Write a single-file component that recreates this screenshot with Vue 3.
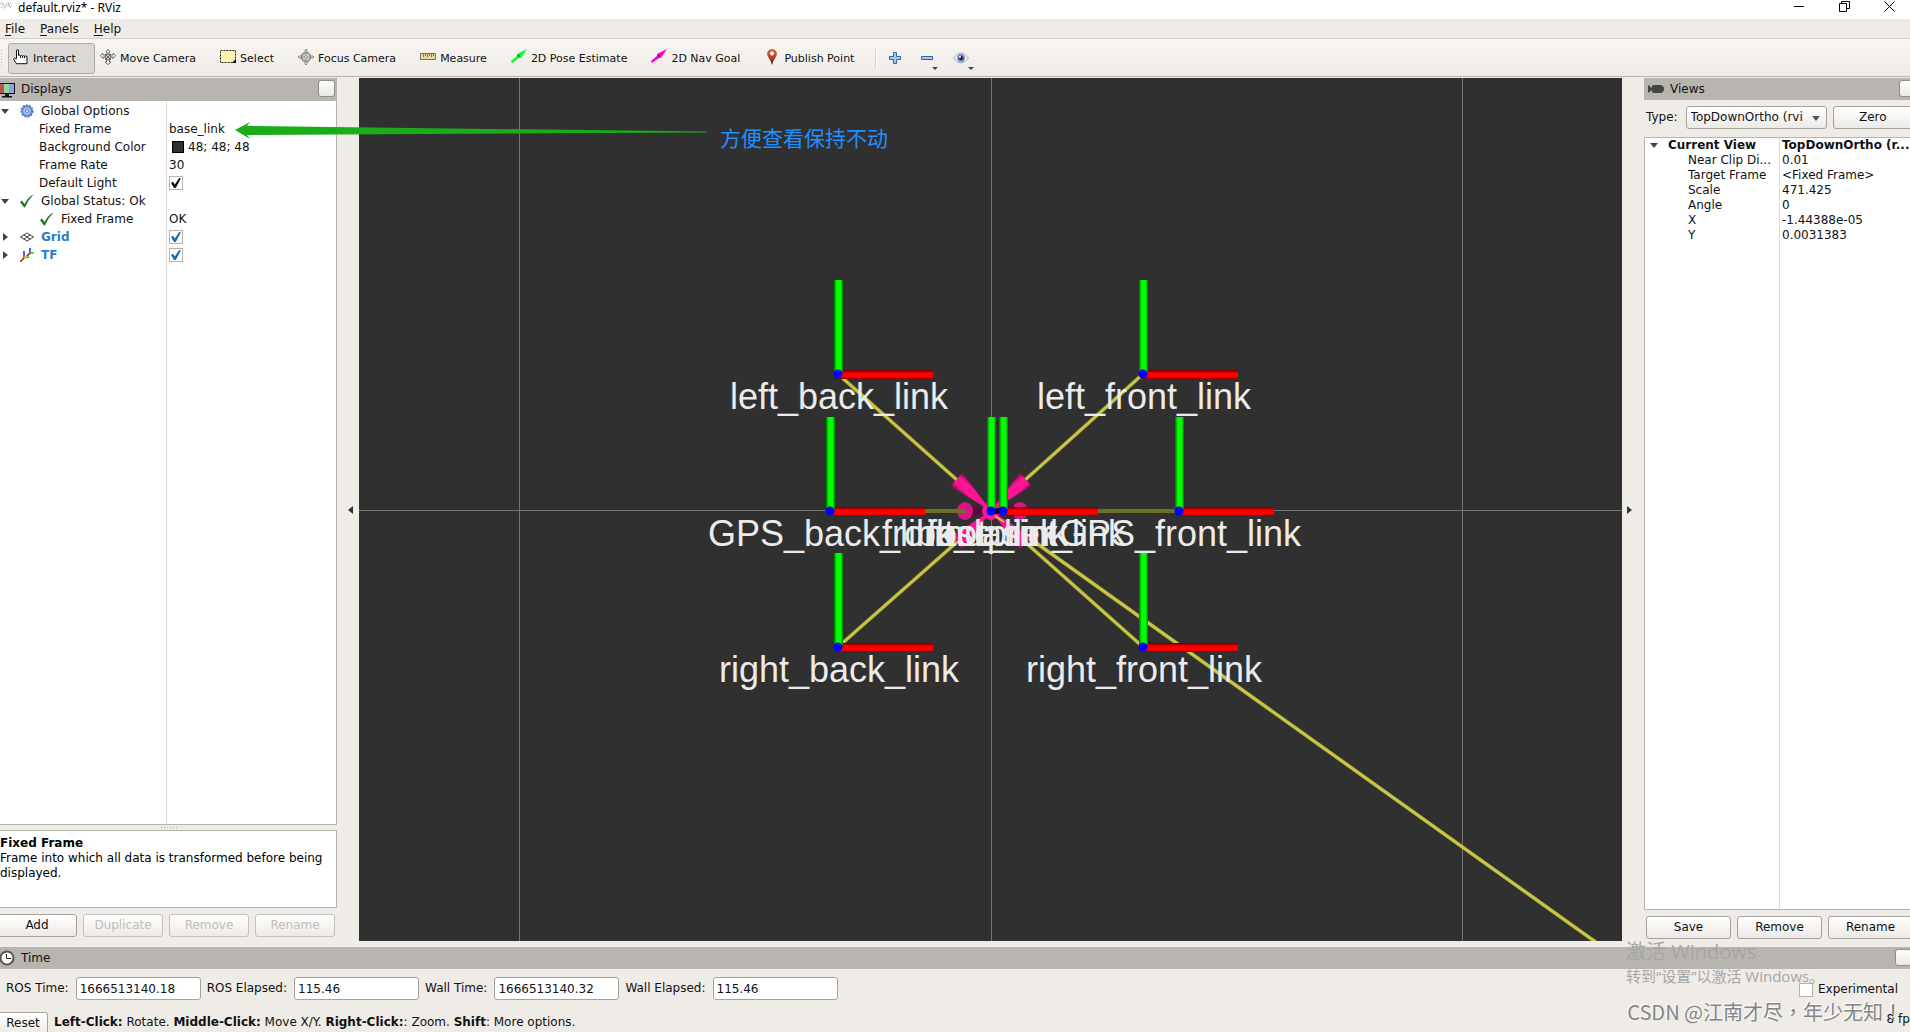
<script setup>
import { ref } from 'vue'

const tools = [
  { id: 'interact', label: 'Interact', active: true },
  { id: 'move', label: 'Move Camera' },
  { id: 'select', label: 'Select' },
  { id: 'focus', label: 'Focus Camera' },
  { id: 'measure', label: 'Measure' },
  { id: 'pose', label: '2D Pose Estimate' },
  { id: 'nav', label: '2D Nav Goal' },
  { id: 'publish', label: 'Publish Point' },
]

const displays = [
  { name: 'Global Options', level: 0, icon: 'gear', arrow: 'open' },
  { name: 'Fixed Frame', level: 1, value: 'base_link' },
  { name: 'Background Color', level: 1, value: '48; 48; 48', swatch: true },
  { name: 'Frame Rate', level: 1, value: '30' },
  { name: 'Default Light', level: 1, check: true },
  { name: 'Global Status: Ok', level: 0, icon: 'ok', arrow: 'open' },
  { name: 'Fixed Frame', level: 2, icon: 'ok', value: 'OK' },
  { name: 'Grid', level: 0, icon: 'grid', arrow: 'closed', check: true, display: true },
  { name: 'TF', level: 0, icon: 'tf', arrow: 'closed', check: true, display: true },
]

const view = [
  { name: 'Near Clip Di...', value: '0.01' },
  { name: 'Target Frame', value: '<Fixed Frame>' },
  { name: 'Scale', value: '471.425' },
  { name: 'Angle', value: '0' },
  { name: 'X', value: '-1.44388e-05' },
  { name: 'Y', value: '0.0031383' },
]

const times = ref([
  { id: 'ros-time', label: 'ROS Time:', value: '1666513140.18' },
  { id: 'ros-elapsed', label: 'ROS Elapsed:', value: '115.46' },
  { id: 'wall-time', label: 'Wall Time:', value: '1666513140.32' },
  { id: 'wall-elapsed', label: 'Wall Elapsed:', value: '115.46' },
])

const frames = [
  { x: 838, y: 374, labels: ['left_back_link'] },
  { x: 1143, y: 374, labels: ['left_front_link'] },
  { x: 830, y: 511, labels: ['GPS_back_link'] },
  { x: 1179, y: 511, labels: ['GPS_front_link'] },
  { x: 991, y: 511, labels: ['base_link', 'imu_link', 'footprint'] },
  { x: 1003, y: 511, labels: ['front_laser_link'] },
  { x: 838, y: 647, labels: ['right_back_link'] },
  { x: 1143, y: 647, labels: ['right_front_link'] },
]
</script>

<template>
  <div class="window">
    <header class="titlebar">
      <svg class="app-icon" width="13" height="12" viewBox="0 0 13 12" fill="none" stroke="#a9a9a9">
        <path d="M0 3l3 2-2 3M2 2l3 4-2 4M6 3l2 3 3-3M8 2l2 6 2-3M5 7l4-2" stroke-dasharray="2 1" />
      </svg>
      <span class="title">default.rviz* - RViz</span>
      <div class="win-buttons">
        <button aria-label="Minimize"><svg width="11" height="11"><path d="M0 5.500h10" stroke="#000" /></svg></button>
        <button aria-label="Restore"><svg width="11" height="11" fill="none" stroke="#000"><path d="M.5 2.500h7v8h-7zM2.500 2.500v-2h8v7h-3" /></svg></button>
        <button aria-label="Close"><svg width="11" height="11"><path d="M.5.5l10 10M10.500.5l-10 10" stroke="#000" /></svg></button>
      </div>
    </header>

    <nav class="menubar">
      <button><u>F</u>ile</button>
      <button><u>P</u>anels</button>
      <button><u>H</u>elp</button>
    </nav>

    <div class="toolbar">
      <i class="handle"></i>
      <button v-for="t in tools" :key="t.id" class="tool" :class="{ active: t.active }">
        <svg width="16" height="16" viewBox="0 0 16 16">
          <g v-if="t.id === 'interact'" stroke="#111" fill="#fff" stroke-linejoin="round">
            <path d="M3.500 9.500V2q0-1.500 1-1.500T5.500 2v4.500q1-1 2 .3 1-1 2 .3 1-.8 2 .2 1.500-.8 2.500.2v7.200H3.500L.5 10q.5-1.800 3 0" />
            <path d="M7.500 6.500v2.500M9.500 7v2M11.500 7v2" fill="none" />
          </g>
          <g v-else-if="t.id === 'move'" fill="#fff" stroke="#666">
            <path d="M8 .5l2 2.500H9v3h4V4.500L15.500 6.500 13 9.500V8H9.500v5H11l-3 2.500L5 13h1.500V8H3v1.500L.5 6.500 3 4.500V6h4V3H6z" />
            <circle cx="8" cy="8" r="3" fill="#ccc" /><path d="M5 11l6-6M5 5l6 6" />
          </g>
          <g v-else-if="t.id === 'select'">
            <path d="M.5 1.500h15v12H.5z" fill="#fff3b2" stroke="#222" stroke-dasharray="2 1" />
            <path d="M16 10v4h-4z" />
          </g>
          <g v-else-if="t.id === 'focus'" fill="none" stroke="#888">
            <circle cx="8" cy="8" r="4.500" stroke-width="1.500" /><circle cx="8" cy="8" r="1.500" />
            <path d="M7 1v5M9 1v5M7 10v5M9 10v5M1 7h5M1 9h5M10 7h5M10 9h5M7 .5h2M7 15.500h2M.5 7v2M15.500 7v2" />
          </g>
          <g v-else-if="t.id === 'measure'">
            <path d="M.5 4.500h15v6H.5z" fill="#e7da9e" stroke="#77736f" />
            <path d="M3.500 5v3M5.500 5v2M7.500 5v3M9.500 5v2M11.500 5v3M13.500 5v2" stroke="#77736f" />
          </g>
          <g v-else-if="t.id === 'pose' || t.id === 'nav'" :fill="t.id === 'pose' ? '#0f3' : '#f0c'">
            <path d="M0 12l6-5V5L16 0 10 9H8l-7 5z" /><path d="M6 6l3 0-1 3z" fill="#222" opacity=".6" />
          </g>
          <g v-else>
            <defs><linearGradient id="pin" x2="0" y2="1"><stop stop-color="#f0603a" /><stop offset=".6" stop-color="#a93c20" /><stop offset="1" stop-color="#3c2414" /></linearGradient></defs>
            <path d="M8 16Q7 12 4.500 8.500 2 5 4 2 5.500 0 8 0t4 2q2 3-.5 6.500T8 16z" fill="url(#pin)" />
            <circle cx="8" cy="4.500" r="2" fill="#fff" />
          </g>
        </svg>
        <span>{{ t.label }}</span>
      </button>
      <i class="sep"></i>
      <button class="mini" aria-label="Add tool">
        <svg width="12" height="12"><path d="M4.500.5h3v4h4v3h-4v4h-3v-4h-4v-3h4z" fill="#a9c6e8" stroke="#3465a4" /></svg>
      </button>
      <button class="mini drop" aria-label="Remove tool">
        <svg width="12" height="12"><path d="M.5 4.500h11v3H.5z" fill="#a9c6e8" stroke="#3465a4" /></svg>
      </button>
      <button class="mini drop" aria-label="Tool visibility">
        <svg width="16" height="12"><path d="M.5 6Q4 1 8 1t7.500 5Q12 11 8 11T.5 6z" fill="#eee" stroke="#aaa" /><circle cx="8" cy="6" r="3.800" fill="#5f7fc4" /><circle cx="8" cy="6" r="2" fill="#111b44" /><circle cx="7" cy="5" r="1" fill="#fff" /></svg>
      </button>
    </div>

    <main class="body">
      <aside class="dock left">
        <div class="dock-title">
          <svg width="15" height="16" viewBox="0 0 15 16"><path d="M-1 1h16v11H-1z" fill="#111" /><path d="M0 2h4v9H0z" fill="#b55" /><path d="M4 2h5v9H4z" fill="#8d9" /><path d="M9 2h5v9H9z" fill="#99e" /><path d="M5 12h4v2h3v1.500H2V14h3z" fill="#111" /></svg>
          <h2>Displays</h2>
          <button class="float" aria-label="Float Displays"></button>
        </div>
        <div class="tree display-tree">
          <table>
            <colgroup><col class="name-col" /><col /></colgroup>
            <tbody>
              <tr v-for="(r, i) in displays" :key="i">
                <td>
                  <span class="cell" :class="['level' + r.level, { display: r.display }]">
                    <i v-if="r.level === 0" class="arrow" :class="r.arrow"></i>
                    <svg v-if="r.icon" width="14" height="14" viewBox="0 0 14 14">
                      <g v-if="r.icon === 'gear'">
                        <circle cx="7" cy="7" r="5.500" fill="#8ab0dd" stroke="#3d73b5" stroke-width="2" stroke-dasharray="2 1" />
                        <circle cx="7" cy="7" r="4.500" fill="#9dbde3" stroke="#5585c0" /><circle cx="7" cy="7" r="1.500" fill="#fff" stroke="#5585c0" />
                      </g>
                      <path v-else-if="r.icon === 'ok'" d="M0 8l2-1.500 2.500 3.500Q8 3 13.500.5 8 6 5 13.500H4z" fill="#1e7a28" />
                      <g v-else-if="r.icon === 'grid'" fill="none" stroke="#444"><path d="M.5 7L7 3l6.500 4L7 11zM3.800 5l6.500 4M10.200 5L3.800 9" /></g>
                      <g v-else fill="none" stroke-width="1.500"><path d="M4 10V3" stroke="#22f" /><path d="M4 10l-4 4" stroke="#e00" /><path d="M4 10l5-1" stroke="#0c0" /><path d="M4 10l6-5" stroke="#fc0" /><path d="M10 5V0" stroke="#22f" /><path d="M10 5h4" stroke="#0d0" /><path d="M10 5l-3 3" stroke="#e00" /></g>
                    </svg>
                    <span>{{ r.name }}</span>
                  </span>
                </td>
                <td>
                  <input v-if="r.check" type="checkbox" class="check" :class="{ blue: r.display }" :aria-label="r.name" checked />
                  <span v-else class="cell"><i v-if="r.swatch" class="swatch"></i>{{ r.value }}</span>
                </td>
              </tr>
            </tbody>
          </table>
        </div>
        <i class="grip"></i>
        <div class="description"><b>Fixed Frame</b><p>Frame into which all data is transformed before being displayed.</p></div>
        <div class="actions">
          <button class="btn">Add</button>
          <button class="btn" disabled>Duplicate</button>
          <button class="btn" disabled>Remove</button>
          <button class="btn" disabled>Rename</button>
        </div>
      </aside>

      <button class="collapse" aria-label="Hide left panel"><i class="to-left"></i></button>

      <section class="viewport">
        <svg viewBox="359 78 1263 863" preserveAspectRatio="xMidYMid slice">
          <defs>
            <linearGradient id="green"><stop stop-color="#007000" /><stop offset=".3" stop-color="#0f0" /><stop offset=".75" stop-color="#0f0" /><stop offset="1" stop-color="#007000" /></linearGradient>
            <linearGradient id="red" x2="0" y2="1"><stop stop-color="#600" /><stop offset=".35" stop-color="#f00" /><stop offset=".8" stop-color="#f00" /><stop offset="1" stop-color="#700" /></linearGradient>
            <linearGradient id="cone-a" gradientUnits="userSpaceOnUse" x1="951" y1="486" x2="963" y2="473"><stop stop-color="#8d0b51" /><stop offset=".3" stop-color="#ff1493" /><stop offset=".7" stop-color="#ff1493" /><stop offset="1" stop-color="#7c0a48" /></linearGradient>
            <linearGradient id="cone-b" gradientUnits="userSpaceOnUse" x1="1020" y1="473" x2="1032" y2="486"><stop stop-color="#8d0b51" /><stop offset=".3" stop-color="#ff1493" /><stop offset=".7" stop-color="#ff1493" /><stop offset="1" stop-color="#7c0a48" /></linearGradient>
            <linearGradient id="cone-c" gradientUnits="userSpaceOnUse" x1="951" y1="536" x2="963" y2="549"><stop stop-color="#8d0b51" /><stop offset=".3" stop-color="#ff1493" /><stop offset=".7" stop-color="#ff1493" /><stop offset="1" stop-color="#7c0a48" /></linearGradient>
            <linearGradient id="cone-d" gradientUnits="userSpaceOnUse" x1="1020" y1="549" x2="1032" y2="536"><stop stop-color="#8d0b51" /><stop offset=".3" stop-color="#ff1493" /><stop offset=".7" stop-color="#ff1493" /><stop offset="1" stop-color="#7c0a48" /></linearGradient>
          </defs>
          <path d="M519.500 78v863M991.500 78v863M1462.500 78v863M359 510.500h1263" stroke="#747474" />
          <g fill="none" stroke-width="4">
            <path d="M830 511h136M1020 511h159" stroke="#716e26" />
            <g stroke="#77742b"><path d="M838 374L957 480M1143 374L1025 480M838 647L957 542M1143 647L1025 542M1025 535L1597 943" /></g>
            <g stroke="#c8c646" stroke-width="3"><path d="M838 374L957 480M1143 374L1025 480M838 647L957 542M1143 647L1025 542M1025 535L1597 943" /></g>
          </g>
          <g>
            <path d="M965 503l26 8-26 8zM1020 503l-29 8 29 8z" fill="#5c0a38" />
            <ellipse cx="965" cy="511" rx="8" ry="9" fill="#d81583" /><ellipse cx="1020" cy="511" rx="8" ry="9" fill="#d81583" />
            <path d="M950.500 486l12-13 28.500 38z" fill="url(#cone-a)" />
            <path d="M1020 473l11.500 13L991 511z" fill="url(#cone-b)" />
            <path d="M951 536l12 13 28-38z" fill="url(#cone-c)" />
            <path d="M1020 549l11.500-13L991 511z" fill="url(#cone-d)" />
            <circle cx="991" cy="511" r="9" fill="#ff1493" />
            <path d="M952 511h14" stroke="#716e26" stroke-width="4" />
            <path d="M995 516l9 6" stroke="#c8c646" stroke-width="2" />
          </g>
          <g v-for="(f, i) in frames" :key="i">
            <rect v-if="f.x !== 991" :x="f.x" :y="f.y - 4" width="95" height="9" fill="url(#red)" />
            <rect v-else :x="f.x" :y="f.y - 3" width="10" height="6" fill="#200" />
            <rect :x="f.x - 4" :y="f.y - 94" width="9" height="92" fill="url(#green)" />
            <circle :cx="f.x" :cy="f.y" r="4.500" fill="#00f" />
          </g>
          <g class="labels">
            <template v-for="(f, i) in frames" :key="i">
              <text v-for="l in f.labels" :key="l" :x="f.x + 1" :y="f.y + 35">{{ l }}</text>
            </template>
          </g>
        </svg>
      </section>

      <button class="collapse" aria-label="Hide right panel"><i class="to-right"></i></button>

      <aside class="dock right">
        <div class="dock-title">
          <svg width="16" height="10"><path d="M0 1l4 3V1.500Q5 1 7 1h6q3 1 3 4t-3 4H7Q4 9 4 8V6L0 9z" fill="#444" /></svg>
          <h2>Views</h2>
          <button class="float" aria-label="Float Views"></button>
        </div>
        <div class="type-row">
          <label for="view-type">Type:</label>
          <div class="select-wrap"><select id="view-type"><option>TopDownOrtho (rvi</option></select></div>
          <button class="btn">Zero</button>
        </div>
        <div class="tree view-tree">
          <table>
            <colgroup><col class="name-col" /><col /></colgroup>
            <tbody>
              <tr class="head"><th><span class="cell"><i class="arrow open"></i>Current View</span></th><th>TopDownOrtho (r...</th></tr>
              <tr v-for="r in view" :key="r.name"><td>{{ r.name }}</td><td>{{ r.value }}</td></tr>
            </tbody>
          </table>
        </div>
        <div class="actions">
          <button class="btn">Save</button>
          <button class="btn">Remove</button>
          <button class="btn">Rename</button>
        </div>
      </aside>
    </main>

    <section class="time">
      <div class="dock-title">
        <svg width="15" height="16"><circle cx="7" cy="8" r="6.500" fill="#fff" stroke="#555" stroke-width="2" /><path d="M6.500 4v4.500H11" fill="none" stroke="#222" /></svg>
        <h2>Time</h2>
        <button class="float" aria-label="Float Time"></button>
      </div>
      <div class="time-row">
        <div v-for="t in times" :key="t.id" class="field">
          <label :for="t.id">{{ t.label }}</label>
          <input :id="t.id" v-model="t.value" type="text" />
        </div>
        <label class="experimental"><input type="checkbox" class="check" />Experimental</label>
      </div>
    </section>

    <footer class="status">
      <button class="btn">Reset</button>
      <p><b>Left-Click:</b> Rotate. <b>Middle-Click:</b> Move X/Y. <b>Right-Click:</b>: Zoom. <b>Shift</b>: More options.</p>
      <span class="fps">8 fps</span>
    </footer>

    <div class="note">
      <svg width="472" height="18"><path d="M0 8L15 0l-3 4 460 5.500v1L12 13l3 4z" fill="#1aad19" /></svg>
      <span>方便查看保持不动</span>
    </div>
    <div class="activate"><strong>激活 Windows</strong><span>转到“设置”以激活 Windows。</span></div>
    <div class="credit">CSDN @江南才尽，年少无知！</div>
  </div>
</template>

<style>
body { overflow: hidden; }
</style>

<style scoped>
* { box-sizing: border-box; }
.window {
  position: relative; display: flex; flex-direction: column; height: 100vh; overflow: hidden;
  background: #efebe7; color: #111; font: 12px/15px "DejaVu Sans", "Noto Sans CJK SC", sans-serif;
}
button, input, select { font: inherit; color: inherit; margin: 0; }
button { background: none; border: 0; padding: 0; white-space: nowrap; }
h2, p { margin: 0; font: inherit; }
svg { display: block; flex: none; }

.titlebar { display: flex; align-items: flex-start; height: 19px; flex: none; background: #fff; color: #000; }
.app-icon { margin-right: 5px; }
.title { font: 12px/16px "Noto Sans", sans-serif; }
.win-buttons { display: flex; gap: 34px; margin: 1px 15px 0 auto; }

.menubar { display: flex; gap: 15px; height: 20px; flex: none; padding: 1px 5px 0; border-bottom: 1px solid #d3cfca; }
.menubar u { text-underline-offset: 2px; }

.toolbar {
  display: flex; align-items: center; height: 38px; flex: none; padding-top: 1px; font-size: 11px;
  border-bottom: 1px solid #b8b4b0; background: linear-gradient(#f8f5f1, #efece7);
}
.handle { width: 4px; height: 18px; margin-right: 4px; background: radial-gradient(#bbb 1px, transparent 1px) 0 0 / 3px 3px; }
.tool { display: flex; align-items: center; gap: 4px; height: 31px; padding: 0 18px 0 4px; border: 1px solid transparent; border-radius: 3px; }
.tool svg { margin-bottom: 2px; }
.tool.active { background: #dcd8d5; border-color: #aeaaa6; }
.sep { width: 2px; height: 19px; margin: 0 12px 0 2px; background: #d3cfca; border-right: 1px solid #fff; }
.mini { position: relative; margin-right: 20px; }
.drop::after { content: ""; position: absolute; right: -5px; bottom: -6px; border: 3px solid transparent; border-top-color: #444; border-bottom: 0; }

.body { display: flex; flex: 1; min-height: 0; padding: 1px 0 6px; }
.dock { display: flex; flex-direction: column; flex: none; }
.dock.left { width: 337px; }
.dock.right { width: 270px; margin-right: -4px; }
.dock-title { display: flex; align-items: center; gap: 6px; height: 22px; flex: none; background: #b8b4b0; }
.dock.left .dock-title { height: 23px; }
.dock.right .dock-title { padding-left: 4px; }
.float { width: 17px; height: 17px; margin: 0 2px 2px auto; border: 1px solid #918d89; border-radius: 3px; background: linear-gradient(#fff, #ebe8e5); }
.dock.right .float, .time .float { margin-right: -2px; }

.tree { flex: 1; min-height: 0; overflow: hidden; border: 1px solid #b6b2ae; background: linear-gradient(#dcdad8, #dcdad8) 166px 0 / 1px 100% no-repeat #fff; }
.display-tree { border-width: 0 1px 1px 0; padding-top: 1px; }
table { width: 100%; table-layout: fixed; border-collapse: collapse; }
td, th { height: 18px; padding: 0; line-height: 15px; text-align: left; white-space: nowrap; }
.name-col { width: 169px; }
.cell { display: flex; align-items: center; }
.level0 svg { margin: 0 7px 0 8px; }
.level1 { padding-left: 39px; }
.level2 { padding-left: 40px; }
.level2 svg { margin-right: 7px; }
.display { color: #2d7cc8; font-weight: bold; }
.arrow { width: 12px; height: 10px; flex: none; display: flex; align-items: center; }
.arrow::before { content: ""; margin-left: 1px; border: 4px solid transparent; }
.arrow.open::before { border-top: 5px solid #444; border-bottom: 0; }
.arrow.closed::before { margin-left: 3px; border-left: 5px solid #444; border-right: 0; }
.swatch { width: 12px; height: 12px; margin: 0 4px 0 3px; background: #303030; border: 1px solid #000; }
.check { appearance: none; display: block; width: 14px; height: 14px; border: 1px solid #b6b2ae; background: #fff; }
.check:checked::after { content: ""; display: block; width: 10px; height: 10px; margin: 1px; background: #111; clip-path: polygon(0 50%, 20% 38%, 38% 65%, 82% 0, 98% 4%, 48% 100%, 30% 100%); }
.check.blue:checked::after { background: #1f66ad; }

.grip { width: 18px; height: 5px; margin: 0 auto; background: radial-gradient(#aaa 1px, transparent 1px) 0 1px / 3px 3px repeat-x; }
.description { height: 78px; padding: 5px 8px 0 0; border: 1px solid #b6b2ae; border-left: 0; background: #fff; color: #000; }
.actions { display: flex; gap: 6px; }
.left .actions { margin: 6px 2px 4px -3px; }
.right .actions { margin: 6px 1px 2px 2px; }
.actions .btn { flex: 1; }
.btn { height: 23px; border: 1px solid #a5a19d; border-radius: 3px; background: linear-gradient(#fff, #eceae7); }
.btn:disabled { color: #c1bdb9; border-color: #c4c0bc; }

.collapse { display: flex; align-items: center; justify-content: center; width: 22px; flex: none; }
.to-left { border: 4px solid transparent; border-right: 5px solid #333; border-left: 0; margin-left: 4px; }
.to-right { border: 4px solid transparent; border-left: 5px solid #333; border-right: 0; margin-right: 8px; }

.viewport { flex: 1; min-width: 0; background: #303030; }
.viewport svg { width: 100%; height: 100%; }
.labels { font: 36px "Liberation Sans", sans-serif; fill: #ebebeb; text-anchor: middle; }

.type-row { display: flex; align-items: center; gap: 6px; height: 37px; flex: none; padding: 0 1px 2px 2px; }
.select-wrap { position: relative; width: 141px; margin-left: 2px; }
.select-wrap::after { content: ""; position: absolute; right: 7px; top: 10px; border: 4px solid transparent; border-top: 5px solid #555; border-bottom: 0; pointer-events: none; }
select { appearance: none; display: block; width: 100%; height: 23px; padding: 0 18px 0 4px; border: 1px solid #a5a19d; border-radius: 3px; background: linear-gradient(#fff, #eceae7); }
.type-row .btn { flex: 1; }
.view-tree { background-position: 134px 0; }
.view-tree .name-col { width: 137px; }
.view-tree td, .view-tree th { height: 15px; }
.view-tree td:first-child { padding-left: 43px; }
.view-tree .arrow { width: 19px; margin-left: 4px; }

.time { flex: none; }
.time-row { display: flex; align-items: center; gap: 6px; height: 39px; padding: 0 12px 0 6px; }
.field { display: flex; align-items: center; gap: 7px; }
.field input { width: 125px; height: 23px; padding: 0 3px; border: 1px solid #a5a19d; border-radius: 3px; background: #fff; }
.experimental { display: flex; align-items: center; gap: 5px; margin-left: auto; padding-top: 2px; }
.status { display: flex; gap: 6px; height: 24px; flex: none; padding-top: 4px; overflow: hidden; }
.status .btn { width: 50px; flex: none; margin-left: -2px; }
.status p { padding-top: 3px; }
.fps { margin: 0 -6px 0 auto; white-space: nowrap; }

.note { position: absolute; left: 235px; top: 122px; display: flex; gap: 13px; color: #1e90ff; font: 21px/30px "Noto Sans CJK SC", sans-serif; }
.activate { position: absolute; right: 92px; top: 938px; display: flex; flex-direction: column; width: 192px; color: #a6a6a6; white-space: nowrap; font-family: "Open Sans", "Noto Sans CJK SC", sans-serif; }
.activate strong { font-size: 20px; line-height: 28px; font-weight: normal; }
.activate span { font-size: 15px; line-height: 20px; }
.credit { position: absolute; right: 7px; top: 998px; white-space: nowrap; color: #858585; font: 20px/28px "Noto Sans CJK TC", sans-serif; text-shadow: -1px -1px #fff; }
</style>
